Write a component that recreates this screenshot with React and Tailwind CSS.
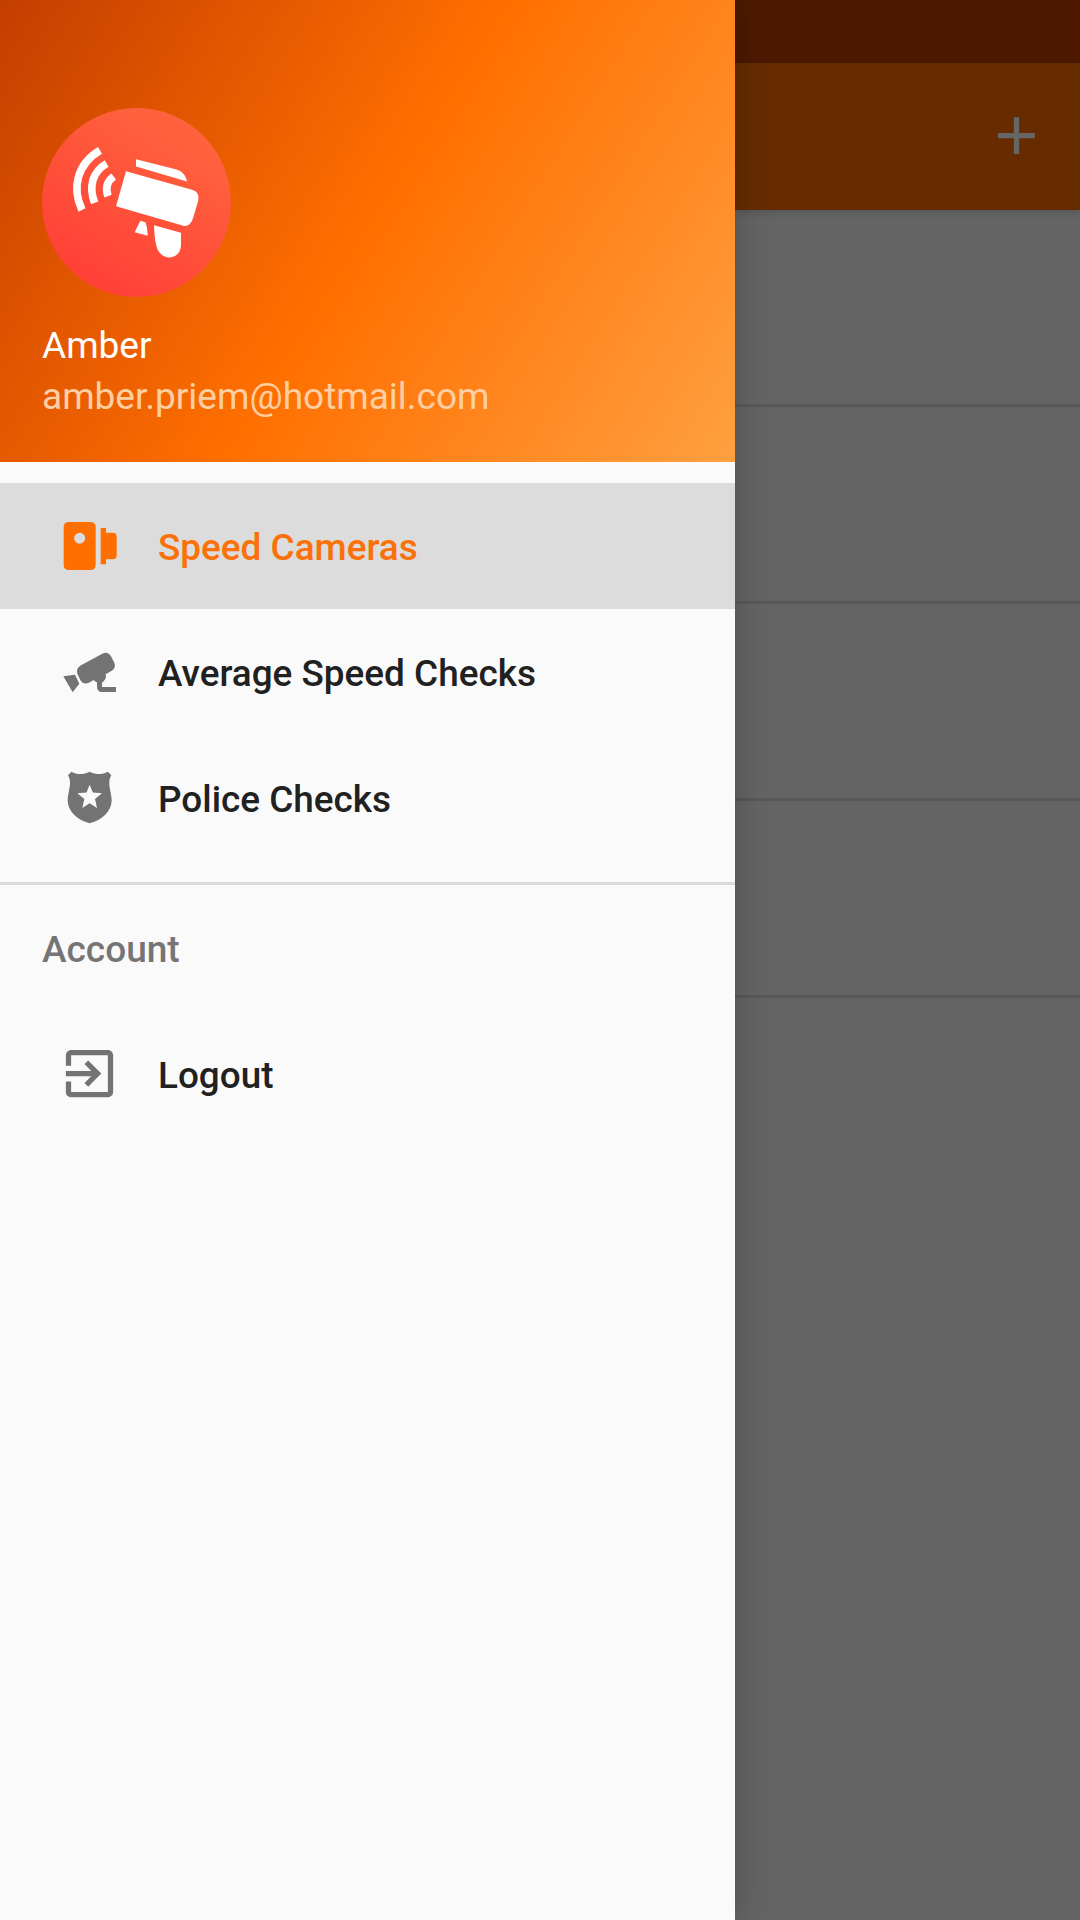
import React from "react";

function LogoAvatar() {
  return (
    <svg className="block h-[189px] w-[189px]" viewBox="36 38.5 567 567" aria-hidden="true">
      <defs>
        <linearGradient id="avatar" x1="0.2" y1="0.9" x2="0.7" y2="0.1">
          <stop offset="0" stopColor="#ff4037" />
          <stop offset="1" stopColor="#ff623d" />
        </linearGradient>
      </defs>
      <circle cx="319.5" cy="322" r="283.5" fill="url(#avatar)" />
      <g fill="none" stroke="#fff" strokeWidth="23">
        <path d="M210 165.500C142 206 124 277 156 344.500" />
        <path d="M230 205C187 230 175 275 194 323" />
        <path d="M251 244C232 258 225 278 234 303" />
      </g>
      <g fill="#fff">
        <path d="M318 192L437 222C456 227 466 238 471 259L318 214Z" />
        <path d="M288 228L486 284Q510 291 505 315L490 366Q482 395 460 392L258 333Z" />
        <path d="M331 377L346 381Q352 393 353 422L314 411Z" />
        <path d="M372 390L453 413V448C453 498 388 500 379 451C374 431 373 411 372 390Z" />
      </g>
    </svg>
  );
}

function SpeedCameraIcon() {
  return (
    <svg className="h-[63px] w-[63px]" viewBox="24 30 189 189" fill="currentColor" aria-hidden="true">
      <path
        fillRule="evenodd"
        d="M57 51H121Q137 51 137 67V179Q137 195 121 195H57Q41 195 41 179V67Q41 51 57 51ZM89 83A16.500 16.500 0 1 0 89 116A16.500 16.500 0 1 0 89 83Z"
      />
      <path d="M152 69H168V83H189Q200 84 200 94V152Q200 162 189 163H168V178H152Z" />
    </svg>
  );
}

function CctvIcon() {
  return (
    <svg className="h-[63px] w-[63px]" viewBox="24 18 189 189" fill="currentColor" aria-hidden="true">
      <path d="M93 91L157 56Q174 48 183 64L193 83Q199 98 185 107L167 118Q171 132 156 143V156H198V171H155Q141 170 141 155V142Q133 139 131 135L117 143Q101 150 92 137L82 116Q77 101 93 91Z" />
      <path d="M40 124L75 119L88 146L68 172Z" />
    </svg>
  );
}

function PoliceBadgeIcon() {
  return (
    <svg className="h-[63px] w-[63px]" viewBox="24 36 189 189" fill="currentColor" aria-hidden="true">
      <path
        fillRule="evenodd"
        d="M64 50C82 60 101 59 119 50C137 59 156 60 174 50L184 61C170 82 184 108 185 136C185 169 156 196 119 205C82 196 53 169 53 136C54 108 68 82 54 61ZM119 89L109.500 112.500L82 115L103 132L97 159L119 145L141 159L135 132L156 115L128.500 112.500Z"
      />
    </svg>
  );
}

function ExitIcon() {
  return (
    <svg className="mb-[2px] h-[63px] w-[63px]" viewBox="0 0 24 24" fill="currentColor" aria-hidden="true">
      <path d="M10.090 15.590L11.500 17l5-5-5-5-1.410 1.410L12.670 11H3v2h9.670l-2.580 2.590zM19 3H5c-1.110 0-2 .9-2 2v4h2V5h14v14H5v-4H3v4c0 1.100.89 2 2 2h14c1.100 0 2-.9 2-2V5c0-1.100-.9-2-2-2z" />
    </svg>
  );
}

function NavItem({ icon, label, selected = false }) {
  return (
    <a
      className={
        selected
          ? "flex h-[126px] items-center bg-[#dcdcdc] pl-[58px] text-[#ff6f00]"
          : "flex h-[126px] items-center pl-[58px] text-[#737373]"
      }
    >
      {icon}
      <span
        className={
          selected
            ? "ml-[37px] pt-[4px] text-[36.900px] leading-[56px] font-medium text-[#fb7109]"
            : "ml-[37px] pt-[4px] text-[36.900px] leading-[56px] font-medium text-[#212121]"
        }
      >
        {label}
      </span>
    </a>
  );
}

function Drawer() {
  return (
    <aside className="relative z-10 h-full w-[735px] shrink-0 bg-[#fafafa] shadow-[0_0_32px_rgba(0,0,0,0.22)]">
      <header className="h-[462px] bg-[linear-gradient(122.15deg,#c43e00_0%,#ff6f00_50%,#ffa040_100%)] px-[42px] pt-[108px] text-[37px]">
        <LogoAvatar />
        <div className="mt-[23px] leading-[51px] text-white">Amber</div>
        <div className="leading-[51px] text-[#ffcfa3]">amber.priem@hotmail.com</div>
      </header>
      <nav className="pt-[21px]">
        <NavItem icon={<SpeedCameraIcon />} label="Speed Cameras" selected />
        <NavItem icon={<CctvIcon />} label="Average Speed Checks" />
        <NavItem icon={<PoliceBadgeIcon />} label="Police Checks" />
        <div className="mt-[21px] h-[3px] bg-[#dbdbdb]" />
        <h2 className="flex h-[126px] items-center pt-[4px] pl-[42px] text-[37px] leading-[56px] font-medium text-[#757575]">
          Account
        </h2>
        <NavItem icon={<ExitIcon />} label="Logout" />
      </nav>
    </aside>
  );
}

function DimmedPage() {
  return (
    <main className="flex-1 bg-[#646464]">
      <div className="h-[63px] bg-[#4e1900]" />
      <div className="relative flex h-[147px] items-center justify-end bg-[#662c00] pr-[32px] pb-[2px] shadow-[0_2px_8px_rgba(0,0,0,0.16)]">
        <svg className="h-[63px] w-[63px] text-[#666666]" viewBox="0 0 24 24" fill="currentColor" aria-hidden="true">
          <path d="M19 13h-6v6h-2v-6H5v-2h6V5h2v6h6v2z" />
        </svg>
      </div>
      {[0, 1, 2, 3].map((row) => (
        <div key={row} className="h-[197px] border-b-[3px] border-[#585858]" />
      ))}
    </main>
  );
}

export default function App() {
  return (
    <div className="flex h-[1920px] w-[1080px] overflow-hidden bg-[#646464] font-['Roboto',sans-serif]">
      <Drawer />
      <DimmedPage />
    </div>
  );
}
